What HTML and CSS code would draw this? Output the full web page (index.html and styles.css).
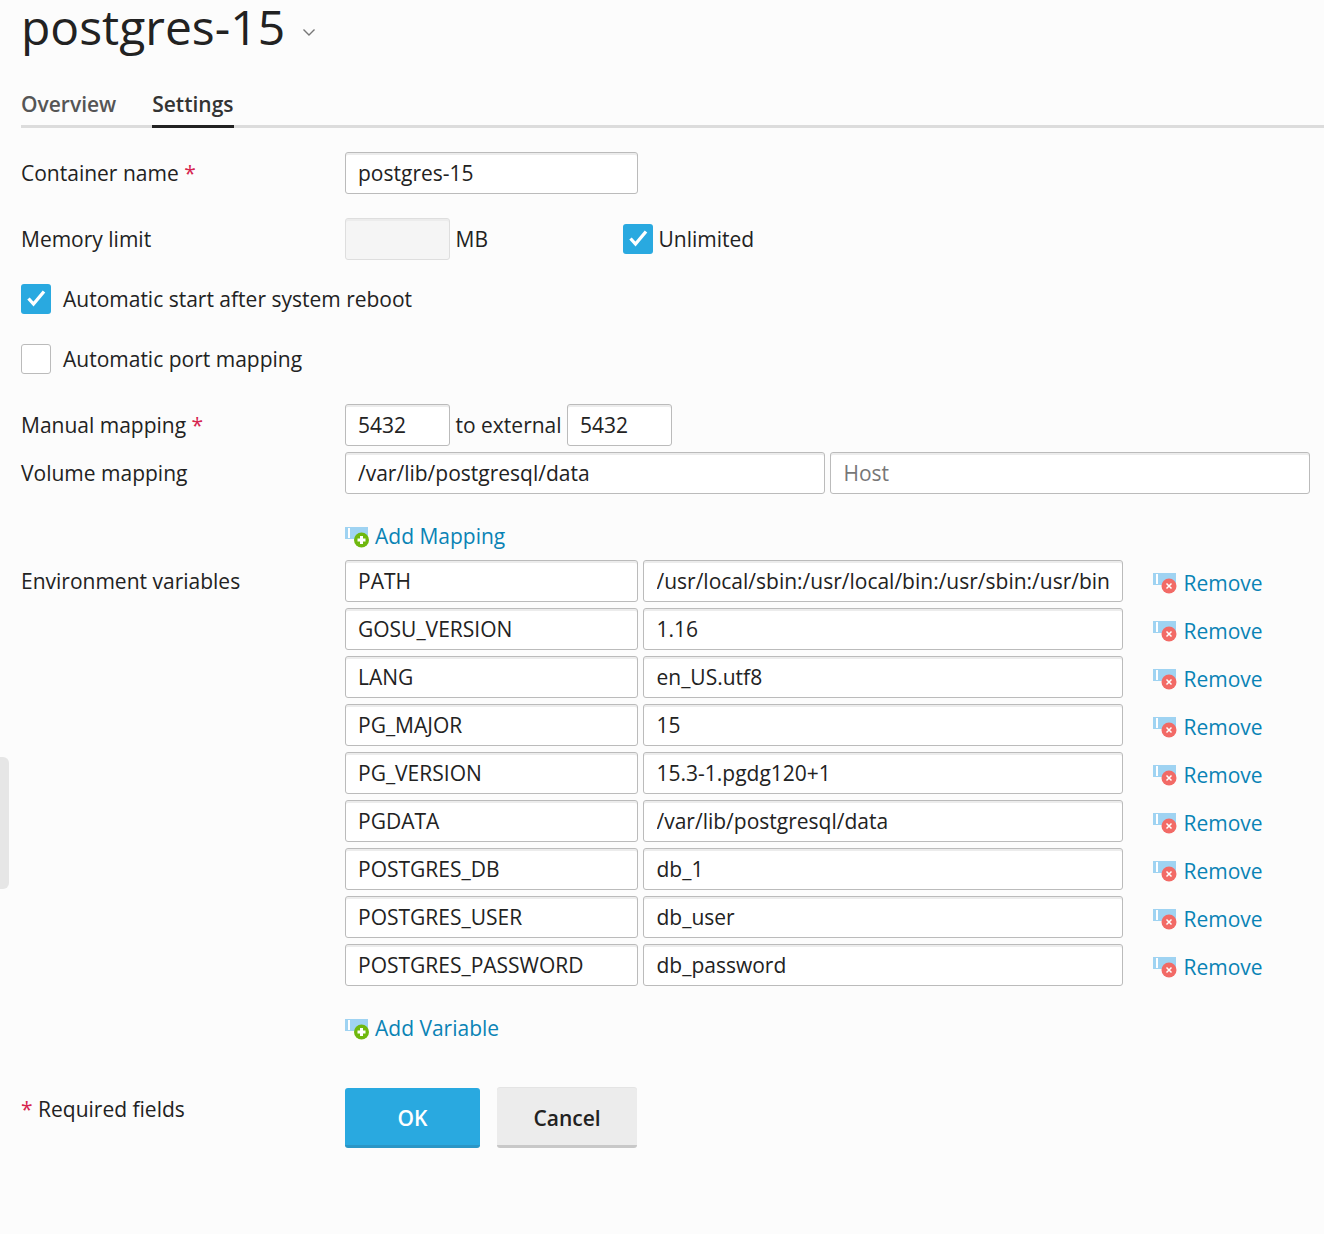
FILE: index.html
```html
<!DOCTYPE html>
<html>
<head>
    <title>postgres-15</title>
    <link rel="stylesheet" href="styles.css">
</head>
<body>
    <svg class="icon-defs" width="0" height="0">
        <symbol id="icon-add" viewBox="0 0 24 22">
            <rect x="0" y="1" width="23" height="12" fill="#9fd3f2"/>
            <rect x="3" y="2" width="2" height="10" fill="#fff"/>
            <circle cx="16.500" cy="14" r="7.500" fill="#6fb80e"/>
            <path d="M16.500 10v8M12.500 14h8" stroke="#fff" stroke-width="3"/>
        </symbol>
        <symbol id="icon-remove" viewBox="0 0 24 22">
            <rect x="0" y="1" width="23" height="12" fill="#9fd3f2"/>
            <rect x="3" y="2" width="2" height="10" fill="#fff"/>
            <circle cx="16" cy="14" r="7.500" fill="#f26a66"/>
            <path d="M13.500 11.500l5 5M18.500 11.500l-5 5" stroke="#fff" stroke-width="1.500"/>
        </symbol>
    </svg>

    <div class="side-handle"></div>

    <div class="page">
        <h1 class="title">postgres-15
            <svg class="title-caret" width="14" height="9" viewBox="0 0 14 9"><path d="M1.500 1.500L7 7l5.500-5.500" fill="none" stroke="#777" stroke-width="1.400"/></svg>
        </h1>

        <div class="tabs">
            <a class="tab">Overview</a>
            <a class="tab tab-active">Settings</a>
        </div>

        <form class="settings-form">
            <div class="row row-name">
                <label class="row-label">Container name <span class="req">*</span></label>
                <input class="field field-name" type="text" value="postgres-15">
            </div>

            <div class="row row-memory">
                <label class="row-label">Memory limit</label>
                <input class="field field-short field-disabled" type="text" disabled>
                <span class="unit">MB</span>
                <span class="check check-on check-unlimited"><svg width="30" height="30" viewBox="0 0 30 30"><path d="M7.500 14.500l5 5.500L23 7.500" fill="none" stroke="#fff" stroke-width="3.300"/></svg></span>
                <span class="check-text">Unlimited</span>
            </div>

            <div class="check-row check-row-start">
                <span class="check check-on"><svg width="30" height="30" viewBox="0 0 30 30"><path d="M7.500 14.500l5 5.500L23 7.500" fill="none" stroke="#fff" stroke-width="3.300"/></svg></span>
                <span class="check-text check-text-wide">Automatic start after system reboot</span>
            </div>

            <div class="check-row check-row-port">
                <span class="check"></span>
                <span class="check-text check-text-wide">Automatic port mapping</span>
            </div>

            <div class="row row-manual">
                <label class="row-label">Manual mapping <span class="req">*</span></label>
                <input class="field field-short" type="text" value="5432">
                <span class="unit">to external</span>
                <input class="field field-short" type="text" value="5432">
            </div>

            <div class="row row-volume">
                <label class="row-label">Volume mapping</label>
                <input class="field field-wide" type="text" value="/var/lib/postgresql/data">
                <input class="field field-wide field-host" type="text" placeholder="Host">
            </div>

            <div class="add-line add-mapping">
                <a class="action"><svg class="action-icon" width="24" height="22"><use href="#icon-add"/></svg>Add Mapping</a>
            </div>

            <div class="env-block">
                <label class="row-label">Environment variables</label>
                <div class="env-rows">
                    <div class="env-row">
                        <input class="field field-name" type="text" value="PATH">
                        <input class="field field-wide" type="text" value="/usr/local/sbin:/usr/local/bin:/usr/sbin:/usr/bin">
                        <a class="action action-remove"><svg class="action-icon" width="24" height="22"><use href="#icon-remove"/></svg>Remove</a>
                    </div>
                    <div class="env-row">
                        <input class="field field-name" type="text" value="GOSU_VERSION">
                        <input class="field field-wide" type="text" value="1.16">
                        <a class="action action-remove"><svg class="action-icon" width="24" height="22"><use href="#icon-remove"/></svg>Remove</a>
                    </div>
                    <div class="env-row">
                        <input class="field field-name" type="text" value="LANG">
                        <input class="field field-wide" type="text" value="en_US.utf8">
                        <a class="action action-remove"><svg class="action-icon" width="24" height="22"><use href="#icon-remove"/></svg>Remove</a>
                    </div>
                    <div class="env-row">
                        <input class="field field-name" type="text" value="PG_MAJOR">
                        <input class="field field-wide" type="text" value="15">
                        <a class="action action-remove"><svg class="action-icon" width="24" height="22"><use href="#icon-remove"/></svg>Remove</a>
                    </div>
                    <div class="env-row">
                        <input class="field field-name" type="text" value="PG_VERSION">
                        <input class="field field-wide" type="text" value="15.3-1.pgdg120+1">
                        <a class="action action-remove"><svg class="action-icon" width="24" height="22"><use href="#icon-remove"/></svg>Remove</a>
                    </div>
                    <div class="env-row">
                        <input class="field field-name" type="text" value="PGDATA">
                        <input class="field field-wide" type="text" value="/var/lib/postgresql/data">
                        <a class="action action-remove"><svg class="action-icon" width="24" height="22"><use href="#icon-remove"/></svg>Remove</a>
                    </div>
                    <div class="env-row">
                        <input class="field field-name" type="text" value="POSTGRES_DB">
                        <input class="field field-wide" type="text" value="db_1">
                        <a class="action action-remove"><svg class="action-icon" width="24" height="22"><use href="#icon-remove"/></svg>Remove</a>
                    </div>
                    <div class="env-row">
                        <input class="field field-name" type="text" value="POSTGRES_USER">
                        <input class="field field-wide" type="text" value="db_user">
                        <a class="action action-remove"><svg class="action-icon" width="24" height="22"><use href="#icon-remove"/></svg>Remove</a>
                    </div>
                    <div class="env-row">
                        <input class="field field-name" type="text" value="POSTGRES_PASSWORD">
                        <input class="field field-wide" type="text" value="db_password">
                        <a class="action action-remove"><svg class="action-icon" width="24" height="22"><use href="#icon-remove"/></svg>Remove</a>
                    </div>
                </div>
            </div>

            <div class="add-line add-variable">
                <a class="action"><svg class="action-icon" width="24" height="22"><use href="#icon-add"/></svg>Add Variable</a>
            </div>

            <div class="form-footer">
                <div class="required-note"><span class="req">*</span> Required fields</div>
                <button type="button" class="btn btn-primary">OK</button>
                <button type="button" class="btn btn-cancel">Cancel</button>
            </div>
        </form>
    </div>
</body>
</html>
```

FILE: styles.css
```css
body {
    font-family: "Open Sans", "Noto Sans", sans-serif;
    font-size: 21px;
    line-height: 30px;
    color: #222;
    background-color: #fcfcfc;
    margin: 0;
    padding: 0;
    height: 1234px;
    overflow: hidden;
}

.icon-defs {
    position: absolute;
}

.side-handle {
    position: absolute;
    left: 0;
    top: 757px;
    width: 9px;
    height: 132px;
    background-color: #e6e6e6;
    border-radius: 0 6px 6px 0;
}

.page {
    padding-left: 21px;
}

.title {
    font-size: 48px;
    font-weight: 400;
    line-height: 53px;
    margin: 0;
    height: 56px;
    color: #222;
}

.title-caret {
    margin-left: 4px;
    vertical-align: 8px;
}

.tabs {
    display: flex;
    gap: 36px;
    margin-top: 30px;
    border-bottom: 3px solid #dcdcdc;
    height: 39px;
}

.tab {
    font-weight: 600;
    color: #555;
    height: 39px;
    line-height: 37px;
}

.tab-active {
    color: #333;
    border-bottom: 3px solid #222;
}

.settings-form {
    display: flex;
    flex-direction: column;
}

.row {
    display: flex;
    align-items: center;
    gap: 5px;
    height: 42px;
}

.row-label {
    width: 324px;
    margin-right: -5px;
    flex-shrink: 0;
}

.req {
    color: #d6254f;
}

.row-name {
    margin-top: 24px;
}

.row-memory {
    margin-top: 24px;
}

.row-manual {
    margin-top: 30px;
}

.row-volume {
    margin-top: 6px;
}

.field {
    font-family: inherit;
    font-size: 21px;
    color: #222;
    height: 42px;
    box-sizing: border-box;
    padding: 0 12px;
    background-color: #fff;
    border: 1px solid #bbb;
    border-radius: 3px;
    box-shadow: inset 0 2px 0 #ececec;
    flex-shrink: 0;
}

.field::placeholder {
    color: #777;
}

.field-name {
    width: 293px;
}

.field-short {
    width: 105px;
}

.field-wide {
    width: 480px;
}

.field-host {
    padding-left: 12.5px;
}

.field-disabled {
    background-color: #f5f5f5;
    border-color: #dedede;
}

.unit {
    margin-left: 0.5px;
    margin-right: 0.5px;
}

.check {
    display: block;
    width: 30px;
    height: 30px;
    box-sizing: border-box;
    background-color: #fff;
    border: 1px solid #bbb;
    border-radius: 3px;
    flex-shrink: 0;
}

.check-on {
    background-color: #29a9e0;
    border: none;
}

.check svg {
    display: block;
}

.check-unlimited {
    margin-left: 130px;
}

.check-text-wide {
    margin-left: 12px;
}

.check-row {
    display: flex;
    align-items: center;
    height: 30px;
}

.check-row-start {
    margin-top: 24px;
}

.check-row-port {
    margin-top: 30px;
}

.add-line {
    padding-left: 324px;
    height: 30px;
}

.add-mapping {
    margin-top: 27px;
}

.add-variable {
    margin-top: 27px;
}

.add-line .action-icon {
    margin-top: 2px;
}

.action {
    display: inline-flex;
    align-items: center;
    color: #0a83b5;
}

.action-icon {
    margin-right: 6px;
    flex-shrink: 0;
}

.env-block {
    display: flex;
    margin-top: 9px;
}

.env-block .row-label {
    margin-right: 0;
    padding-top: 6px;
}

.env-rows {
    display: flex;
    flex-direction: column;
    gap: 6px;
}

.env-row {
    display: flex;
    gap: 5px;
    height: 42px;
}

.env-row .field-wide {
    padding-left: 12.5px;
}

.action-remove {
    margin-left: 25px;
    padding-top: 3px;
}

.action-remove .action-icon {
    margin-right: 6.5px;
}

.form-footer {
    display: flex;
    margin-top: 45px;
}

.required-note {
    width: 324px;
    flex-shrink: 0;
    padding-top: 6px;
}

.btn {
    font-family: inherit;
    font-size: 21px;
    font-weight: 600;
    height: 60px;
    box-sizing: border-box;
    border: none;
    border-radius: 3px;
    padding: 2px 0 0;
    cursor: pointer;
}

.btn-primary {
    width: 135px;
    color: #fff;
    background-color: #29a9e0;
    border-bottom: 3px solid #2a96c6;
}

.btn-cancel {
    width: 140px;
    margin-left: 17px;
    color: #222;
    background-color: #ececec;
    border-bottom: 3px solid #c8c8c8;
    box-shadow: 0 -1px 0 #e4e4e4;
}
```
